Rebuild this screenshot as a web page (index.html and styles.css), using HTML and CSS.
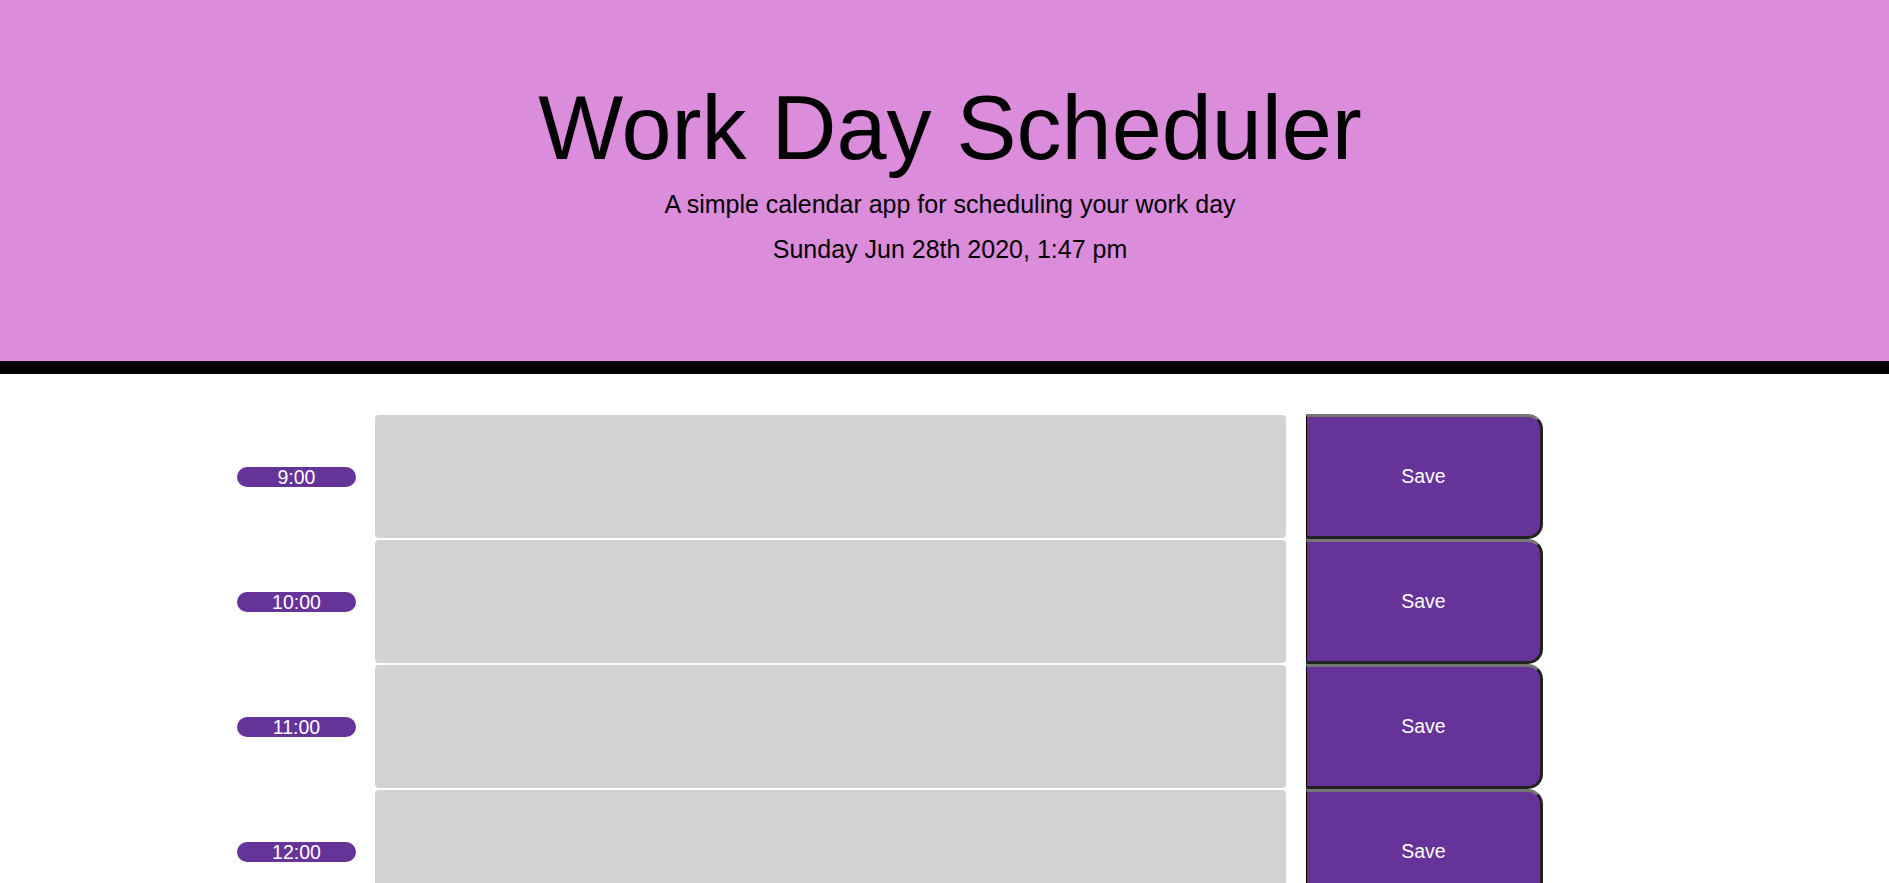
FILE: index.html
```html
<!DOCTYPE html>
<html lang="en">
<head>
<meta charset="utf-8">
<title>Work Day Scheduler</title>
<link rel="stylesheet" href="styles.css">
</head>
<body>
<header class="jumbotron">
  <h1 class="title">Work Day Scheduler</h1>
  <p class="lead">A simple calendar app for scheduling your work day</p>
  <p class="current-day">Sunday Jun 28th 2020, 1:47 pm</p>
</header>
<main class="schedule">
  <div class="time-block"><div class="hour-col"><span class="hour">9:00</span></div><textarea class="description past"></textarea><button class="saveBtn">Save</button></div>
  <div class="time-block"><div class="hour-col"><span class="hour">10:00</span></div><textarea class="description past"></textarea><button class="saveBtn">Save</button></div>
  <div class="time-block"><div class="hour-col"><span class="hour">11:00</span></div><textarea class="description past"></textarea><button class="saveBtn">Save</button></div>
  <div class="time-block"><div class="hour-col"><span class="hour">12:00</span></div><textarea class="description past"></textarea><button class="saveBtn">Save</button></div>
  <div class="time-block"><div class="hour-col"><span class="hour">13:00</span></div><textarea class="description past"></textarea><button class="saveBtn">Save</button></div>
  <div class="time-block"><div class="hour-col"><span class="hour">14:00</span></div><textarea class="description present"></textarea><button class="saveBtn">Save</button></div>
  <div class="time-block"><div class="hour-col"><span class="hour">15:00</span></div><textarea class="description future"></textarea><button class="saveBtn">Save</button></div>
  <div class="time-block"><div class="hour-col"><span class="hour">16:00</span></div><textarea class="description future"></textarea><button class="saveBtn">Save</button></div>
  <div class="time-block"><div class="hour-col"><span class="hour">17:00</span></div><textarea class="description future"></textarea><button class="saveBtn">Save</button></div>
</main>
</body>
</html>
```
FILE: styles.css
```css
html, body {
  margin: 0;
  padding: 0;
}

body {
  font-family: "Liberation Sans", Arial, sans-serif;
  color: #000;
  background: #fff;
}

.jumbotron {
  background-color: #db8ddb;
  border-bottom: 13px solid #000;
  height: 361px;
  box-sizing: content-box;
  text-align: center;
  padding: 0 0 0 11px;
}

.title {
  margin: 0;
  padding-top: 74px;
  font-size: 90px;
  font-weight: 400;
  line-height: 108px;
}

.lead {
  margin: 4px 0 0;
  font-size: 25px;
  line-height: 36px;
}

.current-day {
  margin: 9px 0 0;
  font-size: 25px;
  line-height: 36px;
}

.schedule {
  margin: 40px 0 0 237px;
  width: 1306px;
  display: flex;
  flex-direction: column;
}

.time-block {
  display: flex;
  align-items: stretch;
  height: 125px;
}

.hour-col {
  width: 119px;
  display: flex;
  align-items: center;
}

.hour {
  display: block;
  width: 119px;
  height: 20px;
  line-height: 20px;
  border-radius: 10px;
  background-color: #663399;
  color: #fff;
  font-size: 19.5px;
  text-align: center;
}

.description {
  margin: 0 20px 0 19px;
  width: 911px;
  height: 123px;
  box-sizing: border-box;
  border: none;
  border-radius: 4px;
  resize: none;
  padding: 10px;
  font-family: inherit;
  align-self: center;
}

.past {
  background-color: #d3d3d3;
}

.present {
  background-color: #ff6961;
}

.future {
  background-color: #77dd77;
}

.saveBtn {
  width: 237px;
  height: 125px;
  box-sizing: border-box;
  background-color: #663399;
  color: #fff;
  font-family: "Liberation Sans", Arial, sans-serif;
  font-size: 19.5px;
  border-left: 1px solid #000;
  border-top: 3px solid #767676;
  border-right: 3px solid #222;
  border-bottom: 3px solid #222;
  border-radius: 0 15px 15px 0;
  padding: 0;
}
```
